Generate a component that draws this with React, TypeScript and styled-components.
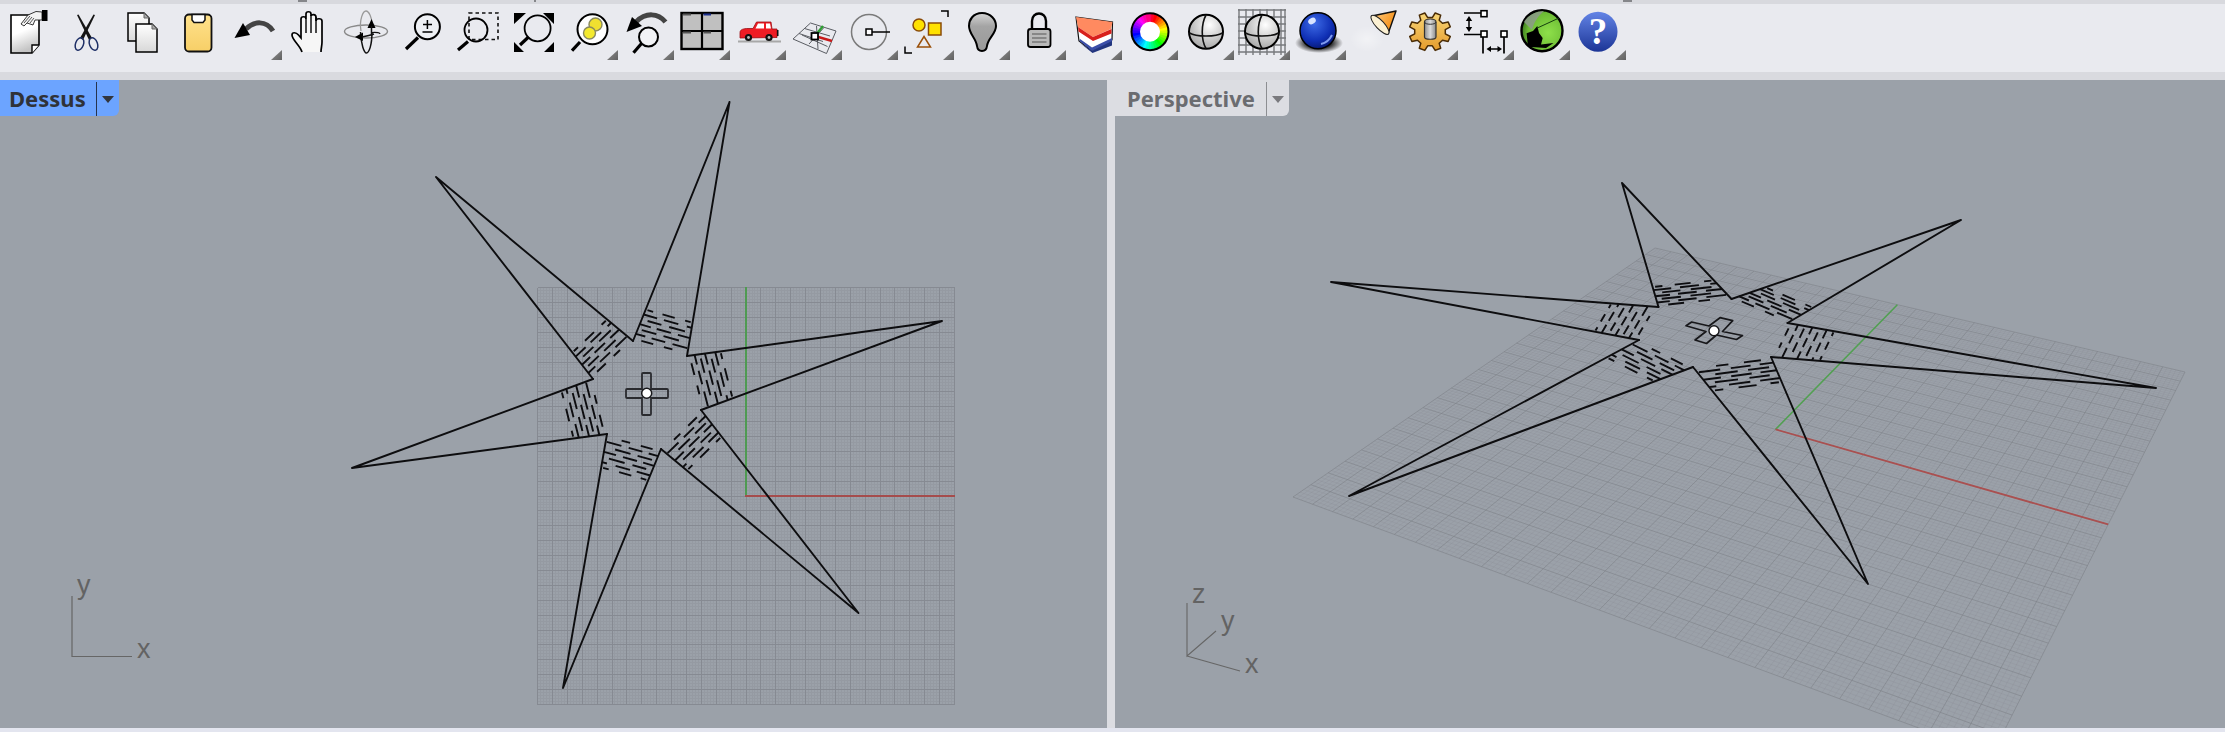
import React from "react";
import styled, { createGlobalStyle } from "styled-components";

type Pt = [number, number];

const GlobalStyle = createGlobalStyle`
  html, body {
    margin: 0;
    padding: 0;
    background: #e4e6ee;
    font-family: "Noto Sans", "Open Sans", sans-serif;
    overflow: hidden;
  }
`;

const Page = styled.div`
  width: 2225px;
  height: 732px;
  display: flex;
  flex-direction: column;
  background: #dbdce1;
`;

const TopStrip = styled.div`
  position: relative;
  height: 4px;
  background: #d8d9de;
`;

const ClippedMark = styled.span<{ $left: number; $width: number }>`
  position: absolute;
  top: 0;
  left: ${({ $left }) => $left}px;
  width: ${({ $width }) => $width}px;
  height: 2px;
  background: #85868a;
`;

const Toolbar = styled.div`
  height: 64px;
  padding: 4px 0 0 2px;
  box-sizing: content-box;
  display: flex;
  align-items: flex-start;
  background: #e9eaef;
`;

const ToolSlot = styled.div<{ $menu?: boolean }>`
  position: relative;
  flex: none;
  width: 56px;
  height: 52px;
  display: flex;
  justify-content: center;

  svg {
    display: block;
  }

  &::after {
    content: "";
    display: ${({ $menu }) => ($menu ? "block" : "none")};
    position: absolute;
    right: 0;
    bottom: 0;
    width: 11px;
    height: 10px;
    background: linear-gradient(135deg, #8e8e8e, #616161);
    clip-path: polygon(100% 0, 100% 100%, 0 100%);
  }
`;

const ToolbarGap = styled.div`
  height: 8px;
  background: #d9dadf;
`;

const Viewports = styled.div`
  height: 648px;
  display: flex;
  gap: 8px;
  background: #dcdde2;
`;

const Viewport = styled.div<{ $width: number }>`
  position: relative;
  flex: none;
  width: ${({ $width }) => $width}px;
  height: 100%;
  background: #9ba1a9;
  overflow: hidden;
`;

const Scene = styled.svg`
  display: block;
  width: 100%;
  height: 100%;
`;

const ViewTab = styled.div<{ $active?: boolean }>`
  position: absolute;
  top: 0;
  left: 0;
  height: 36px;
  display: flex;
  align-items: stretch;
  padding-left: ${({ $active }) => ($active ? 9 : 12)}px;
  border-bottom-right-radius: 6px;
  background: ${({ $active }) => ($active ? "#6ca4ff" : "#dcdde2")};
  color: ${({ $active }) => ($active ? "#2f3238" : "#6b6c70")};
`;

const TabLabel = styled.span<{ $active?: boolean }>`
  font-size: 22px;
  font-weight: 700;
  line-height: 36px;
  padding-right: ${({ $active }) => ($active ? 10 : 11)}px;
`;

const TabArrowBox = styled.div<{ $active?: boolean }>`
  width: 22px;
  margin-top: 2px;
  display: flex;
  align-items: center;
  justify-content: center;
  border-left: 1px solid ${({ $active }) => ($active ? "#26344e" : "#8d8e92")};

  &::after {
    content: "";
    width: 0;
    height: 0;
    border-left: 6px solid transparent;
    border-right: 6px solid transparent;
    border-top: 7px solid ${({ $active }) => ($active ? "#33363d" : "#7a7a7e")};
  }
`;

const BottomStrip = styled.div`
  height: 4px;
  background: #e3e5ef;
`;

const AxisLabel = styled.text`
  font-family: "Liberation Sans", Arial, sans-serif;
  font-size: 27px;
  fill: #636363;
`;

/* ---------- scene geometry ---------- */

const lerp = (a: Pt, b: Pt, t: number): Pt => [a[0] + (b[0] - a[0]) * t, a[1] + (b[1] - a[1]) * t];
const f = (n: number) => n.toFixed(1);

// dash layout of the hatched bands: one list of [from, to] per row
const ROWS: [number, number][][] = [
  [[0.04, 0.16], [0.36, 0.62], [0.84, 0.96]],
  [[0, 0.28], [0.42, 0.72], [0.9, 1]],
  [[0.12, 0.4], [0.56, 0.88]],
  [[0, 0.22], [0.34, 0.62], [0.76, 1]],
  [[0.08, 0.36], [0.5, 0.8]],
  [[0, 0.18], [0.3, 0.56], [0.7, 0.98]],
  [[0.14, 0.36], [0.56, 0.72]],
];
const ROW_V = [0.97, 0.82, 0.67, 0.52, 0.37, 0.22, 0.07];

type Blade = { a: Pt; b: Pt; tip: Pt; band: number };

function hatch({ a, b, tip, band }: Blade) {
  const ae = lerp(a, tip, band);
  const be = lerp(b, tip, band);
  let d = "";
  ROWS.forEach((row, i) => {
    const p = lerp(a, ae, ROW_V[i]);
    const q = lerp(b, be, ROW_V[i]);
    row.forEach(([u0, u1]) => {
      const s = lerp(p, q, u0);
      const e = lerp(p, q, u1);
      d += `M${f(s[0])} ${f(s[1])}L${f(e[0])} ${f(e[1])}`;
    });
  });
  return d;
}

const makeBlades = (base: Pt[], tips: Pt[], bands: number[]): Blade[] =>
  tips.map((tip, i) => ({ a: base[i], b: base[(i + 1) % base.length], tip, band: bands[i] }));

const TOP_BLADES = makeBlades(
  [[633, 341], [687, 356], [701, 410], [661, 449], [607, 434], [593, 379]],
  [[729.5, 102], [942, 321], [858.5, 613], [563, 688], [352, 468], [436, 177]],
  [0.135, 0.135, 0.135, 0.135, 0.135, 0.135]
);

const PERSP_BLADES = makeBlades(
  [[1658.5, 307], [1731.5, 299], [1787.5, 323], [1771, 357], [1693, 367], [1639, 340]],
  [[1622, 183], [1961, 220], [2156, 388], [1868, 584], [1349, 496], [1331, 282]],
  [0.166, 0.152, 0.13, 0.113, 0.115, 0.148]
);

// maps the unit square on to a quad (top-left, top-right, bottom-right, bottom-left)
function homography([p0, p1, p2, p3]: Pt[]) {
  const dx1 = p1[0] - p2[0];
  const dx2 = p3[0] - p2[0];
  const sx = p0[0] - p1[0] + p2[0] - p3[0];
  const dy1 = p1[1] - p2[1];
  const dy2 = p3[1] - p2[1];
  const sy = p0[1] - p1[1] + p2[1] - p3[1];
  const det = dx1 * dy2 - dx2 * dy1;
  const g = (sx * dy2 - dx2 * sy) / det;
  const h = (dx1 * sy - sx * dy1) / det;
  const a = p1[0] - p0[0] + g * p1[0];
  const b = p3[0] - p0[0] + h * p3[0];
  const d = p1[1] - p0[1] + g * p1[1];
  const e = p3[1] - p0[1] + h * p3[1];
  return (u: number, v: number): Pt => {
    const w = g * u + h * v + 1;
    return [(a * u + b * v + p0[0]) / w, (d * u + e * v + p0[1]) / w];
  };
}

function gridPaths(map: (u: number, v: number) => Pt, cells = 28, sub = 5) {
  let major = "";
  let minor = "";
  const total = cells * sub;
  for (let i = 0; i <= total; i++) {
    const t = i / total;
    const p = [map(t, 0), map(t, 1), map(0, t), map(1, t)];
    const seg = `M${f(p[0][0])} ${f(p[0][1])}L${f(p[1][0])} ${f(p[1][1])}M${f(p[2][0])} ${f(p[2][1])}L${f(p[3][0])} ${f(p[3][1])}`;
    if (i % sub === 0) major += seg;
    else minor += seg;
  }
  return { major, minor };
}

const topGrid = gridPaths((u, v) => [537.5 + 417 * u, 287.5 + 417 * v]);
const perspMap = homography([[1655, 248], [2185, 372], [1992, 755], [1293, 497]]);
const perspGrid = gridPaths(perspMap);

function Star({ blades, width }: { blades: Blade[]; width: number }) {
  return (
    <g fill="none" stroke="#0d0d0f" strokeLinecap="round" strokeLinejoin="round">
      {blades.map((b, i) => (
        <g key={i}>
          <path strokeWidth={width} d={`M${b.a[0]} ${b.a[1]}L${b.tip[0]} ${b.tip[1]}L${b.b[0]} ${b.b[1]}`} />
          <path strokeWidth={1.9} stroke="#0d0d10" strokeLinecap="butt" d={hatch(b)} />
        </g>
      ))}
    </g>
  );
}

function TopScene() {
  return (
    <Scene viewBox="0 80 1107 648">
      <g fill="none">
        <path d={topGrid.minor} stroke="#858990" strokeOpacity="0.25" shapeRendering="crispEdges" />
        <path d={topGrid.major} stroke="#868a92" shapeRendering="crispEdges" />
        <path d="M745.5 287V497" stroke="#4f9a52" strokeWidth="2" shapeRendering="crispEdges" />
        <path d="M745 496H955" stroke="#a54c4c" strokeWidth="2" shapeRendering="crispEdges" />
      </g>
      <Star blades={TOP_BLADES} width={1.9} />
      <path
        d="M642 389V374q0-1 1-1h7q1 0 1 1V389H667q1 0 1 1v7q0 1-1 1H651V414q0 1-1 1h-7q-1 0-1-1V398H627q-1 0-1-1v-7q0-1 1-1Z"
        fill="none"
        stroke="#2a2b2f"
        strokeWidth="1.8"
      />
      <circle cx="646.7" cy="393.3" r="5" fill="#fff" stroke="#17171a" strokeWidth="1.5" />
      <path d="M72 596V656.5H132" fill="none" stroke="#666" strokeWidth="1.2" />
      <AxisLabel x="77" y="594">y</AxisLabel>
      <AxisLabel x="137" y="658">x</AxisLabel>
    </Scene>
  );
}

function PerspScene() {
  const o = perspMap(0.5, 0.5);
  const red = perspMap(1, 0.5);
  const green = perspMap(0.5, 0);
  return (
    <Scene viewBox="1115 80 1110 648">
      <g fill="none">
        <path d={perspGrid.minor} stroke="#858990" strokeOpacity="0.4" strokeWidth="0.5" />
        <path d={perspGrid.major} stroke="#7d8188" strokeOpacity="0.75" strokeWidth="0.8" />
        <path d={`M${o[0]} ${o[1]}L${green[0]} ${green[1]}`} stroke="#52a052" strokeWidth="1.6" />
        <path d={`M${o[0]} ${o[1]}L${red[0]} ${red[1]}`} stroke="#aa5050" strokeWidth="1.8" />
      </g>
      <Star blades={PERSP_BLADES} width={1.9} />
      <path
        d="M1686 325.7L1691.7 322L1709 326L1720 317.7L1732.7 320.7L1722.5 331.5L1742.5 335.5L1736.5 339.5L1716.5 335L1706.5 343.5L1695 340L1706 331.5Z"
        fill="none"
        stroke="#17171a"
        strokeWidth="1.7"
        strokeLinejoin="round"
      />
      <circle cx="1714" cy="330.7" r="5" fill="#fff" stroke="#17171a" strokeWidth="1.4" />
      <path d="M1187 603V656L1216 631M1187 656L1240 671" fill="none" stroke="#666" strokeWidth="1.1" />
      <AxisLabel x="1192" y="603">z</AxisLabel>
      <AxisLabel x="1221" y="630">y</AxisLabel>
      <AxisLabel x="1245" y="673">x</AxisLabel>
    </Scene>
  );
}

/* ---------- toolbar icons, each in a 48 x 48 box ---------- */

const Ico = ({ children }: { children: React.ReactNode }) => (
  <svg width="48" height="48" viewBox="0 0 48 48" fill="none" style={{ overflow: "visible" }}>
    {children}
  </svg>
);

const LensHandle = ({ d }: { d: string }) => <path d={d} stroke="#000" strokeWidth="3.2" />;

const sector = (cx: number, cy: number, r: number, a0: number, a1: number) => {
  const p = (a: number): Pt => [cx + r * Math.sin(a), cy - r * Math.cos(a)];
  const [x0, y0] = p(a0);
  const [x1, y1] = p(a1);
  return `M${cx} ${cy}L${f(x0)} ${f(y0)}A${r} ${r} 0 0 1 ${f(x1)} ${f(y1)}Z`;
};

const gearPath = (() => {
  const pts: string[] = [];
  const n = 8;
  for (let i = 0; i < n; i++) {
    const a = (i / n) * Math.PI * 2 + Math.PI / 8;
    const w = Math.PI / n;
    [
      [15.5, a - w * 0.62],
      [21, a - w * 0.36],
      [21, a + w * 0.36],
      [15.5, a + w * 0.62],
    ].forEach(([r, t]) => pts.push(`${f(24 + r * Math.sin(t))} ${f(23.7 - r * Math.cos(t) * 0.92)}`));
  }
  return `M${pts.join("L")}Z`;
})();

const ICONS: { menu?: boolean; icon: React.ReactNode }[] = [
  {
    icon: (
      <Ico>
        <defs>
          <linearGradient id="pg0" x1="0" y1="0" x2="0.3" y2="1">
            <stop offset="0.5" stopColor="#fff" />
            <stop offset="1" stopColor="#c4c4c4" />
          </linearGradient>
        </defs>
        <path d="M5 7H33V37L26 45H5Z" fill="url(#pg0)" stroke="#000" strokeWidth="1.6" />
        <path d="M33 37H26V45" fill="#fff" stroke="#000" strokeWidth="1.4" />
        <path d="M15 16L22 7L30 3.5L36 4V12L29 12L27 17L21 15L18 18Z" fill="#f2f2f2" stroke="#222" strokeWidth="0.9" strokeLinejoin="round" />
        <path d="M18 15L24 8M21 15L26 9M24 15L28 10" stroke="#444" strokeWidth="0.9" />
        <rect x="36" y="2" width="5.5" height="11" fill="#000" />
      </Ico>
    ),
  },
  {
    icon: (
      <Ico>
        <path d="M15 7L16.5 6.5L30 30L27 32Z" fill="#151515" />
        <path d="M33 7L31.5 6.5L18 30L21 32Z" fill="#151515" />
        <ellipse cx="17.5" cy="36" rx="4" ry="6.5" transform="rotate(20 17.5 36)" stroke="#1e2f66" strokeWidth="1.5" />
        <ellipse cx="31.5" cy="36" rx="4" ry="6.5" transform="rotate(-20 31.5 36)" stroke="#1e2f66" strokeWidth="1.5" />
      </Ico>
    ),
  },
  {
    icon: (
      <Ico>
        <defs>
          <linearGradient id="pg2" x1="0" y1="0" x2="0" y2="1">
            <stop offset="0" stopColor="#fff" />
            <stop offset="1" stopColor="#d8d8d8" />
          </linearGradient>
        </defs>
        <path d="M10 5H26L31 10V33H10Z" fill="url(#pg2)" stroke="#000" strokeWidth="1.5" />
        <path d="M26 5V10H31" fill="#aaa" stroke="#666" strokeWidth="1" />
        <path d="M18 16H34L39 21V44H18Z" fill="url(#pg2)" stroke="#000" strokeWidth="1.5" />
        <path d="M34 16V21H39" fill="#aaa" stroke="#666" strokeWidth="1" />
      </Ico>
    ),
  },
  {
    icon: (
      <Ico>
        <defs>
          <linearGradient id="pg3" x1="0" y1="0" x2="0" y2="1">
            <stop offset="0" stopColor="#ffe28c" />
            <stop offset="1" stopColor="#f7cf67" />
          </linearGradient>
        </defs>
        <rect x="11" y="6.5" width="26.5" height="37" rx="4" fill="url(#pg3)" stroke="#111" strokeWidth="1.8" />
        <path d="M18 6.5H31V12L29 14.5H20L18 12Z" fill="#fff" stroke="#111" strokeWidth="1.5" />
      </Ico>
    ),
  },
  {
    menu: true,
    icon: (
      <Ico>
        <path d="M16 21C24 13 36 12 43 23" stroke="#444" strokeWidth="5" />
        <path d="M4.5 30L13 15L20 27Z" fill="#000" />
      </Ico>
    ),
  },
  {
    icon: (
      <Ico>
        <path
          d="M16 44C14 37 6 32 6 27C6 24 10 24 12.5 27L15 30V11C15 8 20 8 20 11V6C20 3 25 3 25 6V8C25 6 30 6 30 9V13C30 10 36 10 36 13V34C36 38 35 40 35 44"
          fill="#f6f6f6"
          stroke="#000"
          strokeWidth="1.7"
        />
        <path d="M20 11V25M25 7V25M30 9V25" stroke="#000" strokeWidth="1.4" />
      </Ico>
    ),
  },
  {
    icon: (
      <Ico>
        <ellipse cx="24" cy="23.5" rx="21.5" ry="6.5" stroke="#8a8a8a" strokeWidth="1.4" />
        <path d="M19 23C17 12 21 3 24 3C27 3 30 10 30 16" stroke="#999" strokeWidth="1.3" />
        <path d="M18.5 24C19 36 22 45 24.5 45C27 45 30 37 30 24" stroke="#111" strokeWidth="1.5" />
        <path d="M29.5 11L33.5 20H25.5Z" fill="#000" />
        <path d="M13 29L21 24.5V33Z" fill="#000" />
        <path d="M20 29C25 28 29 27 32 26M29.5 18V28" stroke="#111" strokeWidth="1.5" />
        <path d="M30 24.5C35 24 38 25 38 26" stroke="#111" strokeWidth="1.2" />
      </Ico>
    ),
  },
  {
    icon: (
      <Ico>
        <circle cx="29.4" cy="18.7" r="12.5" fill="#eef0f4" stroke="#000" strokeWidth="2" />
        <path d="M29.4 12V21M25 16.5H34M24.5 24H34.5" stroke="#000" strokeWidth="1.5" />
        <LensHandle d="M8 41L20 29.5" />
      </Ico>
    ),
  },
  {
    icon: (
      <Ico>
        <rect x="15" y="5" width="29" height="26.5" stroke="#111" strokeWidth="1.6" strokeDasharray="3.5 3" />
        <circle cx="22" cy="22" r="11.5" fill="none" stroke="#000" strokeWidth="1.8" />
        <LensHandle d="M4 42L14 33.5" />
      </Ico>
    ),
  },
  {
    icon: (
      <Ico>
        <circle cx="27.6" cy="20.3" r="13" stroke="#000" strokeWidth="1.8" />
        <LensHandle d="M10 37L18.5 29" />
        <path d="M4 5H16L4 16ZM44 5H33L44 16ZM4 44H14L4 34ZM44 44H34L44 34Z" fill="#000" />
      </Ico>
    ),
  },
  {
    menu: true,
    icon: (
      <Ico>
        <circle cx="26.5" cy="21.3" r="15" fill="#fff" stroke="#000" strokeWidth="2" />
        <circle cx="29.5" cy="16.5" r="6.5" fill="#f0e030" stroke="#8a8a60" strokeWidth="1.4" />
        <circle cx="23.5" cy="25" r="6" fill="#f4ea2e" stroke="#8a8a60" strokeWidth="1.4" />
        <LensHandle d="M6 42.7L14 34" />
      </Ico>
    ),
  },
  {
    menu: true,
    icon: (
      <Ico>
        <path d="M14 14C24 4 36 5 43.5 14" stroke="#444" strokeWidth="5" />
        <path d="M4.5 24L10 9L20 18Z" fill="#000" />
        <circle cx="26.5" cy="29" r="9.5" fill="#f2f3f6" stroke="#000" strokeWidth="2" />
        <LensHandle d="M11.5 44.7L19.5 35.5" />
      </Ico>
    ),
  },
  {
    menu: true,
    icon: (
      <Ico>
        <rect x="3.5" y="5" width="41" height="36" fill="#c0c0c0" stroke="#000" strokeWidth="2.4" />
        <path d="M24 5V41M3.5 23H44.5" stroke="#000" strokeWidth="2.2" />
        <path d="M5 6.5H13M5 24.5H13M25.5 24.5H33" stroke="#555" strokeWidth="2" />
        <path d="M25.5 6.5H33" stroke="#1c2f8c" strokeWidth="2" />
      </Ico>
    ),
  },
  {
    menu: true,
    icon: (
      <Ico>
        <path d="M4 33.5H47" stroke="#a8a8a8" strokeWidth="2" />
        <path d="M6 30V24.5C6 21.5 9.5 20.5 14 20.5H19L22.5 14H37L38 21H43V29.5L6 30Z" fill="#ee1c24" stroke="#9a0f14" strokeWidth="0.8" />
        <path d="M24 15.5H30V20.5H21.5ZM32 15.5H36L37 20.5H32Z" fill="#fff" />
        <path d="M43 22H44.5V28H43Z" fill="#111" />
        <circle cx="14.5" cy="29.5" r="3.6" fill="#111" />
        <circle cx="14.5" cy="29.5" r="1.4" fill="#bbb" />
        <circle cx="35" cy="29.5" r="3.6" fill="#111" />
        <circle cx="35" cy="29.5" r="1.4" fill="#bbb" />
      </Ico>
    ),
  },
  {
    menu: true,
    icon: (
      <Ico>
        <path
          d="M3 31L20.5 15L46 23L36.5 45.5ZM9 25.5L33 33.5M14.5 20.5L40 28M37.5 38.5L12 27M28 41L26.5 18M19 36L33.5 20"
          stroke="#5a5d63"
          strokeWidth="1"
        />
        <path d="M25 28L33 18" stroke="#2f9e33" strokeWidth="2.4" />
        <path d="M25 28L42 33" stroke="#c81a1a" strokeWidth="2.4" />
        <rect x="21.5" y="25" width="6.5" height="6.5" fill="#fff" stroke="#000" strokeWidth="1.8" />
      </Ico>
    ),
  },
  {
    menu: true,
    icon: (
      <Ico>
        <circle cx="23" cy="24" r="17.5" stroke="#7b7b7b" strokeWidth="1.5" />
        <path d="M26 24H44" stroke="#000" strokeWidth="1.5" />
        <rect x="20" y="21" width="6" height="6" fill="#fff" stroke="#000" strokeWidth="1.5" />
      </Ico>
    ),
  },
  {
    menu: true,
    icon: (
      <Ico>
        <path d="M39 3H46V9M3 38.5V45H10" stroke="#000" strokeWidth="1.5" />
        <circle cx="17" cy="17" r="6" fill="#ffe100" stroke="#8a4b08" strokeWidth="1.5" />
        <rect x="26.5" y="15" width="12.5" height="12" fill="#ffe100" stroke="#8a4b08" strokeWidth="1.5" />
        <path d="M22 28.5L28.5 39H15.5Z" stroke="#9a500a" strokeWidth="1.5" />
      </Ico>
    ),
  },
  {
    menu: true,
    icon: (
      <Ico>
        <defs>
          <linearGradient id="pg17" x1="0" y1="0" x2="0" y2="1">
            <stop offset="0" stopColor="#d6d6d6" />
            <stop offset="0.35" stopColor="#a4a4a4" />
            <stop offset="1" stopColor="#9a9a9a" />
          </linearGradient>
        </defs>
        <path
          d="M24 5C15 5 11 12 11 18C11 26 18 30 19 38C19.5 42 21 43 24 43C27 43 28.5 42 29 38C30 30 38 26 38 18C38 12 33 5 24 5Z"
          fill="url(#pg17)"
          stroke="#000"
          strokeWidth="2"
        />
      </Ico>
    ),
  },
  {
    menu: true,
    icon: (
      <Ico>
        <path d="M18 21V13C18 3 32 3 32 13V21" stroke="#000" strokeWidth="2.4" />
        <rect x="14" y="21" width="22.5" height="18" rx="2.5" fill="#b9b9b9" stroke="#000" strokeWidth="1.8" />
        <path d="M18 26H32.5M18 30H32.5M18 34H32.5" stroke="#777" strokeWidth="1.6" />
      </Ico>
    ),
  },
  {
    menu: true,
    icon: (
      <Ico>
        <path d="M6 9L42.5 14L42 32L22 43L9 33Z" fill="#fff" stroke="#111" strokeWidth="1.2" />
        <path d="M6 9L42.5 14L41 21L23 29L8 19Z" fill="#ff8a60" />
        <path d="M23 29L41.5 21L41.5 25.5L23 33L8.5 23.5L8 19Z" fill="#d8201c" />
        <path d="M22 43L42 32V37.5L22.5 45L10 35Z" fill="#22357f" />
        <path d="M10 31L22 39.5L42 30V33L22 43L9.5 33Z" fill="#3b4ea8" />
      </Ico>
    ),
  },
  {
    menu: true,
    icon: (
      <Ico>
        {Array.from({ length: 36 }).map((_, i) => (
          <path
            key={i}
            d={sector(24, 23.7, 18.5, (i / 36) * Math.PI * 2 - 0.09, ((i + 1) / 36) * Math.PI * 2 + 0.02)}
            fill={`hsl(${340 + i * 10}, 100%, 50%)`}
          />
        ))}
        <circle cx="24" cy="23.7" r="10" fill="#fff" />
        <circle cx="24" cy="23.7" r="18.5" stroke="#000" strokeWidth="2" />
      </Ico>
    ),
  },
  {
    menu: true,
    icon: (
      <Ico>
        <defs>
          <radialGradient id="pg21" cx="0.6" cy="0.3" r="0.8">
            <stop offset="0" stopColor="#fff" />
            <stop offset="1" stopColor="#9e9e9e" />
          </radialGradient>
        </defs>
        <circle cx="24" cy="23.7" r="17" fill="url(#pg21)" stroke="#000" strokeWidth="2" />
        <path d="M7.5 25C14 29 34 29 40.5 25M24 7C19 16 19 32 24 40.5" stroke="#111" strokeWidth="1.6" />
      </Ico>
    ),
  },
  {
    menu: true,
    icon: (
      <Ico>
        <defs>
          <radialGradient id="pg22" cx="0.6" cy="0.3" r="0.8">
            <stop offset="0" stopColor="#fff" />
            <stop offset="1" stopColor="#9e9e9e" />
          </radialGradient>
        </defs>
        <path
          d="M1 1V47M8 1V47M15 1V47M22 1V47M29 1V47M36 1V47M43 1V47M47 1V47M0 2H48M0 9H48M0 16H48M0 23H48M0 30H48M0 37H48M0 44H48"
          stroke="#77797d"
          strokeWidth="1.4"
        />
        <circle cx="24" cy="23.7" r="17" fill="url(#pg22)" stroke="#000" strokeWidth="2" />
        <path d="M7.5 25C14 29 34 29 40.5 25M24 7C19 16 19 32 24 40.5" stroke="#111" strokeWidth="1.6" />
      </Ico>
    ),
  },
  {
    menu: true,
    icon: (
      <Ico>
        <defs>
          <radialGradient id="pg23s" cx="0.5" cy="0.5" r="0.5">
            <stop offset="0.5" stopColor="#222" />
            <stop offset="1" stopColor="#222" stopOpacity="0" />
          </radialGradient>
          <radialGradient id="pg23" cx="0.4" cy="0.3" r="0.8">
            <stop offset="0" stopColor="#3d6ae6" />
            <stop offset="0.6" stopColor="#0f2fb4" />
            <stop offset="1" stopColor="#041160" />
          </radialGradient>
        </defs>
        <ellipse cx="25" cy="35" rx="24" ry="10" fill="url(#pg23s)" />
        <circle cx="24" cy="22.7" r="18" fill="url(#pg23)" stroke="#000" strokeWidth="1.5" />
        <ellipse cx="18" cy="13" rx="4" ry="3" fill="#d8e4ff" transform="rotate(-30 18 13)" />
        <path d="M27 36C32 35 36 31 38 27" stroke="#7f9bf0" strokeWidth="2" />
      </Ico>
    ),
  },
  {
    menu: true,
    icon: (
      <Ico>
        <defs>
          <radialGradient id="pg24g" cx="0.5" cy="0.5" r="0.5">
            <stop offset="0" stopColor="#fff" stopOpacity="0.4" />
            <stop offset="1" stopColor="#fff" stopOpacity="0" />
          </radialGradient>
          <linearGradient id="pg24" x1="0" y1="0" x2="1" y2="0.6">
            <stop offset="0" stopColor="#ffd08a" />
            <stop offset="1" stopColor="#f58a0a" />
          </linearGradient>
        </defs>
        <ellipse cx="17" cy="31" rx="17" ry="13" fill="url(#pg24g)" />
        <path d="M46 3L22 8C24 17 30 23 38 26Z" fill="url(#pg24)" stroke="#111" strokeWidth="1.4" strokeLinejoin="round" />
        <ellipse cx="30" cy="16.8" rx="12.5" ry="4.2" transform="rotate(47 30 16.8)" fill="#fbf0d2" stroke="#222" strokeWidth="1" />
      </Ico>
    ),
  },
  {
    menu: true,
    icon: (
      <Ico>
        <defs>
          <linearGradient id="pg25" x1="0" y1="0" x2="0" y2="1">
            <stop offset="0" stopColor="#f8d677" />
            <stop offset="1" stopColor="#e59b2c" />
          </linearGradient>
          <linearGradient id="pg25c" x1="0" y1="0" x2="1" y2="0">
            <stop offset="0" stopColor="#8f8f8f" />
            <stop offset="0.5" stopColor="#dcdcdc" />
            <stop offset="1" stopColor="#8a8a8a" />
          </linearGradient>
        </defs>
        <path d={gearPath} fill="url(#pg25)" stroke="#4a2c06" strokeWidth="1.5" strokeLinejoin="round" />
        <path d="M18.5 14C18.5 10 30 10 30 14V29C30 32 18.5 32 18.5 29Z" fill="url(#pg25c)" stroke="#333" strokeWidth="1.2" />
        <path d="M18.5 14C18.5 17 30 17 30 14" stroke="#333" strokeWidth="1" />
      </Ico>
    ),
  },
  {
    menu: true,
    icon: (
      <Ico>
        <path d="M2 5H19M2 26.5H19M21 29V45.5M42 29V45.5" stroke="#000" strokeWidth="1.7" />
        <rect x="19" y="2.7" width="6" height="6" fill="#fff" stroke="#000" strokeWidth="1.6" />
        <rect x="19" y="23" width="6" height="6" fill="#fff" stroke="#000" strokeWidth="1.6" />
        <rect x="39" y="23" width="6" height="6" fill="#fff" stroke="#000" strokeWidth="1.6" />
        <path d="M7 11V21M26.5 41H37.5" stroke="#000" strokeWidth="1.5" />
        <path d="M7 8L3.8 13H10.2ZM7 24L3.8 19H10.2ZM24.5 41L29 38V44ZM40 41L35.5 38V44Z" fill="#000" />
      </Ico>
    ),
  },
  {
    menu: true,
    icon: (
      <Ico>
        <defs>
          <radialGradient id="pg27" cx="0.65" cy="0.55" r="0.7">
            <stop offset="0" stopColor="#8ee04a" />
            <stop offset="0.7" stopColor="#6cbb34" />
            <stop offset="1" stopColor="#2e6a1a" />
          </radialGradient>
        </defs>
        <circle cx="24" cy="22.7" r="20.5" fill="url(#pg27)" stroke="#000" strokeWidth="2.4" />
        <path d="M6 14C10 7 18 3 26 3C20 8 16 14 14 22Z" fill="#8b9c85" opacity="0.9" />
        <path d="M8.6 25.3L15 23L19.3 18L21 25L24.7 30L23 36.5L35.5 35L28 40L10 38.7Z" fill="#000" />
        <path d="M19.3 20L41 10" stroke="#143f0e" strokeWidth="1" />
      </Ico>
    ),
  },
  {
    menu: true,
    icon: (
      <Ico>
        <defs>
          <linearGradient id="pg28" x1="0" y1="0" x2="0" y2="1">
            <stop offset="0" stopColor="#6384e6" />
            <stop offset="1" stopColor="#1c3596" />
          </linearGradient>
        </defs>
        <ellipse cx="24" cy="23.7" rx="19.5" ry="20" fill="url(#pg28)" />
        <text
          x="24"
          y="36"
          textAnchor="middle"
          fontFamily="Liberation Serif, serif"
          fontWeight="700"
          fontSize="37"
          fill="#fff"
        >
          ?
        </text>
      </Ico>
    ),
  },
];

export default function App() {
  return (
    <Page>
      <GlobalStyle />
      <TopStrip>
        <ClippedMark $left={298} $width={9} />
        <ClippedMark $left={534} $width={2} />
        <ClippedMark $left={1623} $width={9} />
      </TopStrip>
      <Toolbar>
        {ICONS.map((tool, i) => (
          <ToolSlot key={i} $menu={tool.menu}>
            {tool.icon}
          </ToolSlot>
        ))}
      </Toolbar>
      <ToolbarGap />
      <Viewports>
        <Viewport $width={1107}>
          <TopScene />
          <ViewTab $active>
            <TabLabel $active>Dessus</TabLabel>
            <TabArrowBox $active />
          </ViewTab>
        </Viewport>
        <Viewport $width={1110}>
          <PerspScene />
          <ViewTab>
            <TabLabel>Perspective</TabLabel>
            <TabArrowBox />
          </ViewTab>
        </Viewport>
      </Viewports>
      <BottomStrip />
    </Page>
  );
}
